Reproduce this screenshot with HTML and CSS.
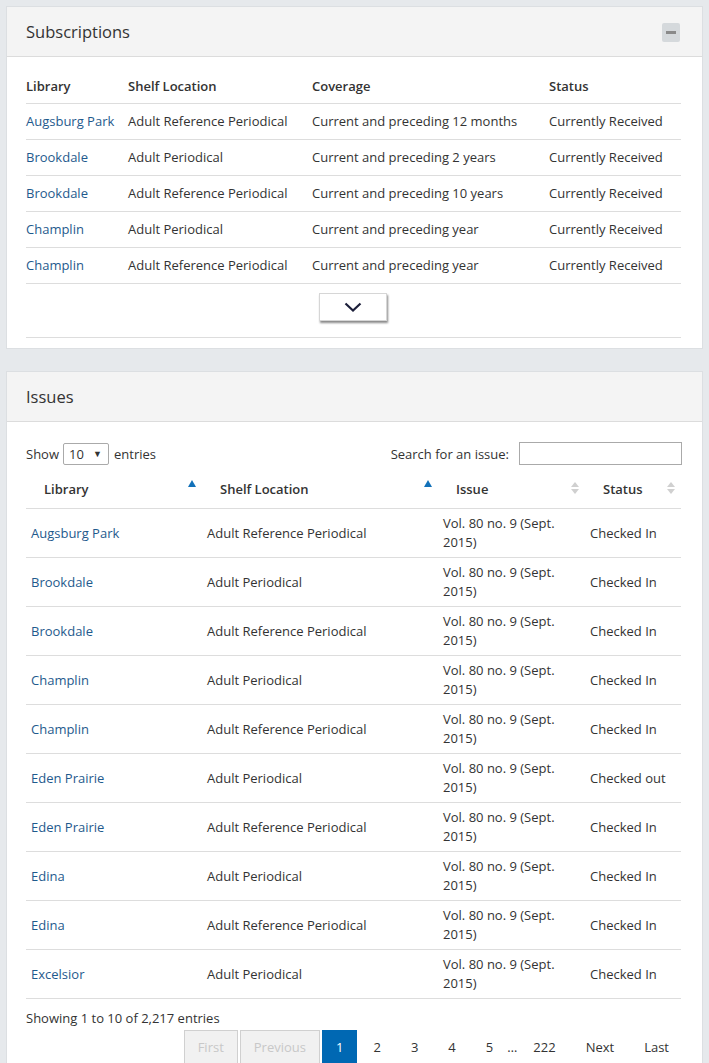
FILE: index.html
```html
<!DOCTYPE html>
<html>
<head>
<meta charset="utf-8">
<link rel="stylesheet" href="styles.css">
</head>
<body>
<div class="page">
  <section class="panel">
    <div class="panel-head">
      <h2 class="panel-title">Subscriptions</h2>
      <button class="collapse-btn" aria-label="Collapse"><span class="minus"></span></button>
    </div>
    <div class="panel-body">
      <table class="subs">
        <thead>
          <tr><th class="c1">Library</th><th class="c2">Shelf Location</th><th class="c3">Coverage</th><th class="c4">Status</th></tr>
        </thead>
        <tbody>
          <tr><td><a href="#">Augsburg Park</a></td><td>Adult Reference Periodical</td><td>Current and preceding 12 months</td><td>Currently Received</td></tr>
          <tr><td><a href="#">Brookdale</a></td><td>Adult Periodical</td><td>Current and preceding 2 years</td><td>Currently Received</td></tr>
          <tr><td><a href="#">Brookdale</a></td><td>Adult Reference Periodical</td><td>Current and preceding 10 years</td><td>Currently Received</td></tr>
          <tr><td><a href="#">Champlin</a></td><td>Adult Periodical</td><td>Current and preceding year</td><td>Currently Received</td></tr>
          <tr><td><a href="#">Champlin</a></td><td>Adult Reference Periodical</td><td>Current and preceding year</td><td>Currently Received</td></tr>
        </tbody>
      </table>
      <div class="more-row">
        <button class="more-btn" aria-label="Show more">
          <svg width="18" height="10" viewBox="0 0 18 10"><path d="M1.5 1.5 L9 8.5 L16.5 1.5" fill="none" stroke="#1c1f3a" stroke-width="2.2"/></svg>
        </button>
      </div>
    </div>
  </section>

  <section class="panel panel-issues">
    <div class="panel-head">
      <h2 class="panel-title">Issues</h2>
    </div>
    <div class="panel-body">
      <div class="controls">
        <div class="length">Show <span class="select"><span>10</span><span class="caret">&#9660;</span></span> entries</div>
        <div class="search">Search for an issue: <span class="search-input"></span></div>
      </div>
      <table class="issues">
        <thead>
          <tr>
            <th class="i1">Library<span class="sort asc"></span></th>
            <th class="i2">Shelf Location<span class="sort asc"></span></th>
            <th class="i3">Issue<span class="sort both"></span></th>
            <th class="i4">Status<span class="sort both"></span></th>
          </tr>
        </thead>
        <tbody>
          <tr><td><a href="#">Augsburg Park</a></td><td>Adult Reference Periodical</td><td>Vol. 80 no. 9 (Sept. 2015)</td><td>Checked In</td></tr>
          <tr><td><a href="#">Brookdale</a></td><td>Adult Periodical</td><td>Vol. 80 no. 9 (Sept. 2015)</td><td>Checked In</td></tr>
          <tr><td><a href="#">Brookdale</a></td><td>Adult Reference Periodical</td><td>Vol. 80 no. 9 (Sept. 2015)</td><td>Checked In</td></tr>
          <tr><td><a href="#">Champlin</a></td><td>Adult Periodical</td><td>Vol. 80 no. 9 (Sept. 2015)</td><td>Checked In</td></tr>
          <tr><td><a href="#">Champlin</a></td><td>Adult Reference Periodical</td><td>Vol. 80 no. 9 (Sept. 2015)</td><td>Checked In</td></tr>
          <tr><td><a href="#">Eden Prairie</a></td><td>Adult Periodical</td><td>Vol. 80 no. 9 (Sept. 2015)</td><td>Checked out</td></tr>
          <tr><td><a href="#">Eden Prairie</a></td><td>Adult Reference Periodical</td><td>Vol. 80 no. 9 (Sept. 2015)</td><td>Checked In</td></tr>
          <tr><td><a href="#">Edina</a></td><td>Adult Periodical</td><td>Vol. 80 no. 9 (Sept. 2015)</td><td>Checked In</td></tr>
          <tr><td><a href="#">Edina</a></td><td>Adult Reference Periodical</td><td>Vol. 80 no. 9 (Sept. 2015)</td><td>Checked In</td></tr>
          <tr><td><a href="#">Excelsior</a></td><td>Adult Periodical</td><td>Vol. 80 no. 9 (Sept. 2015)</td><td>Checked In</td></tr>
        </tbody>
      </table>
      <div class="info">Showing 1 to 10 of 2,217 entries</div>
      <div class="paging">
        <span class="pg disabled">First</span>
        <span class="pg disabled">Previous</span>
        <span class="pg current">1</span>
        <span class="pg">2</span>
        <span class="pg">3</span>
        <span class="pg">4</span>
        <span class="pg">5</span>
        <span class="ellipsis">…</span>
        <span class="pg">222</span>
        <span class="pg">Next</span>
        <span class="pg">Last</span>
      </div>
    </div>
  </section>
</div>
</body>
</html>
```

FILE: styles.css
```css
* { box-sizing: border-box; }
html, body { margin: 0; padding: 0; }
body {
  background: #e6e9ec;
  font-family: "Open Sans", "Liberation Sans", sans-serif;
  font-size: 13px;
  color: #333;
}
.page { padding: 6px 6px 0; }
.panel {
  background: #fff;
  border: 1px solid #dcdfe2;
}
.panel-issues { margin-top: 22px; }
.panel-head {
  height: 50px;
  background: #f4f4f4;
  border-bottom: 1px solid #dcdcdc;
  display: flex;
  align-items: center;
  justify-content: space-between;
  padding: 0 22px 0 19px;
}
.panel-title {
  margin: 0;
  font-size: 16.5px;
  font-weight: 400;
  color: #333;
}
.collapse-btn {
  width: 18px;
  height: 19px;
  border: 0;
  border-radius: 2px;
  background: #d5d9dc;
  padding: 0;
  display: flex;
  align-items: center;
  justify-content: center;
  margin-top: 1px;
}
.minus { width: 10px; height: 3px; background: #8a8a8a; display: block; }
.panel-body { padding: 13px 21px 10px 19px; }
a { color: #1f5a8d; text-decoration: none; }

table { border-collapse: collapse; width: 100%; }
.subs th {
  text-align: left;
  font-weight: 600;
  padding: 7px 0 8px;
  line-height: 18px;
  border-bottom: 1px solid #ddd;
  color: #333;
}
.subs td {
  padding: 8px 0;
  line-height: 19px;
  border-bottom: 1px solid #ddd;
  white-space: nowrap;
}
.subs .c1 { width: 102px; }
.subs .c2 { width: 184px; }
.subs .c3 { width: 237px; }

.more-row {
  padding: 9px 0 16px;
  border-bottom: 1px solid #ddd;
  display: flex;
  justify-content: center;
}
.more-btn {
  width: 68px;
  height: 28px;
  background: #fff;
  border: 1px solid #d6d6d6;
  box-shadow: 1px 2px 2px #8a8a8a;
  padding: 0;
  display: flex;
  align-items: center;
  justify-content: center;
  margin-left: -2px;
}

.panel-issues .panel-body { padding-top: 20px; }
.controls {
  display: flex;
  justify-content: space-between;
  align-items: center;
  height: 23px;
}
.length, .search { display: flex; align-items: center; }
.select {
  display: inline-flex;
  align-items: center;
  justify-content: space-between;
  width: 46px;
  height: 22px;
  border: 1px solid #aaa;
  border-radius: 2px;
  margin: 0 5px 0 4px;
  padding: 0 6px 0 5px;
}
.caret { font-size: 9px; color: #333; }
.search-input {
  display: inline-block;
  width: 163px;
  height: 23px;
  border: 1px solid #aaa;
  margin-left: 10px;
  margin-right: -1px;
}
.issues { margin-top: 5px; table-layout: fixed; }
.issues th {
  position: relative;
  text-align: left;
  font-weight: 600;
  padding: 10px 18px;
  line-height: 18px;
  border-bottom: 1px solid #ddd;
}
.issues .i1 { width: 176px; }
.issues .i2 { width: 236px; }
.issues .i3 { width: 147px; }
.issues td {
  padding: 5px 5px;
  line-height: 19px;
  height: 49px;
  border-bottom: 1px solid #ddd;
  vertical-align: middle;
}
.sort {
  position: absolute;
  right: 6px;
  top: 50%;
  width: 8px;
  height: 14px;
  margin-top: -9px;
}
.sort.asc::before {
  content: "";
  position: absolute;
  left: 0; top: 0;
  border-left: 4px solid transparent;
  border-right: 4px solid transparent;
  border-bottom: 7px solid #1271b9;
}
.sort.both::before, .sort.both::after {
  content: "";
  position: absolute;
  left: 0;
  border-left: 4px solid transparent;
  border-right: 4px solid transparent;
}
.sort.both::before { top: 2px; border-bottom: 5px solid #d0d0d0; }
.sort.both::after { top: 9px; border-top: 5px solid #d0d0d0; }

.info { margin-top: 10px; line-height: 19px; }
.paging {
  margin-top: 2px;
  display: flex;
  justify-content: flex-end;
  align-items: center;
  margin-right: -2px;
}
.pg {
  display: inline-block;
  padding: 6px 13px;
  line-height: 20px;
  border: 1px solid transparent;
  margin-left: 2px;
  color: #333;
}
.pg.disabled {
  color: #c8c8c8;
  background: #f1f1f1;
  border-color: #d0d0d0;
}
.pg.current {
  background: #0068b3;
  border-color: #0068b3;
  color: #fff;
}
.ellipsis { padding: 0; margin-left: 0; }
```
